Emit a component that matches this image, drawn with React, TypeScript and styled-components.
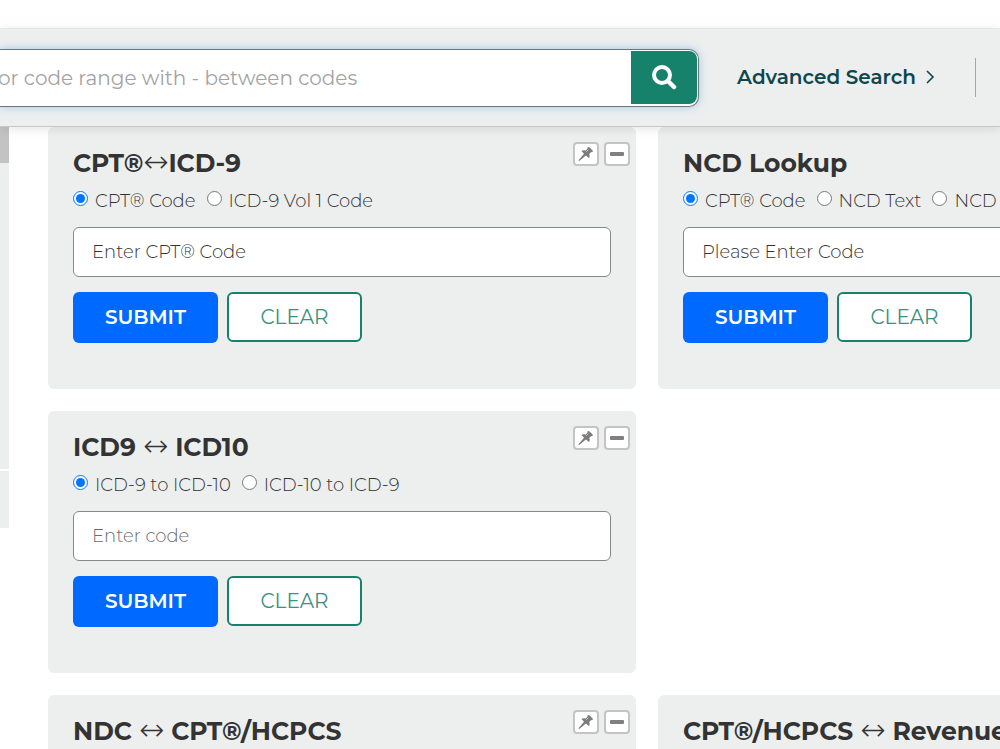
import React from "react";
import styled, { createGlobalStyle } from "styled-components";

const GlobalStyle = createGlobalStyle`
  * { box-sizing: border-box; }
  body {
    margin: 0;
    background: #fff;
    color: #333;
    font-family: Montserrat, Inter, "Liberation Sans", sans-serif;
    overflow-x: hidden;
  }
  button, input { font-family: inherit; }
`;

const Page = styled.div`
  padding-top: 28px;
  overflow: hidden;
  min-height: 100vh;
`;

const Header = styled.header`
  position: relative;
  z-index: 1;
  display: flex;
  align-items: center;
  height: 99px;
  background: #edefef;
  border-top: 1px solid #e4e6e6;
  border-bottom: 1px solid #c6c8c8;
  box-shadow: 0 2px 10px rgba(0, 0, 0, 0.1);
`;

const SearchForm = styled.form`
  display: flex;
  flex: 0 1 699px;
  height: 58px;
  padding: 1px 1px 2px 0;
  background: #fff;
  border: 1px solid #6f7577;
  border-left: 0;
  border-radius: 0 10px 10px 0;
  box-shadow: 0 0 8px rgba(80, 160, 225, 0.5);
`;

const SearchInput = styled.input`
  flex: 1;
  min-width: 0;
  padding: 2px 0 0;
  border: 0;
  outline: 0;
  background: transparent;
  font-size: 20px;
  text-indent: -2px;
  &::placeholder { color: #a3a3a3; opacity: 1; }
`;

const SearchButton = styled.button`
  display: grid;
  place-items: center;
  width: 66px;
  padding: 0;
  border: 0;
  border-radius: 0 8px 8px 0;
  background: #17826c;
`;

const AdvancedLink = styled.a`
  display: flex;
  align-items: center;
  gap: 10px;
  margin-left: 38px;
  padding-bottom: 2px;
  color: #0d474c;
  font-size: 20px;
  font-weight: 600;
  text-decoration: none;
  white-space: nowrap;
`;

const Divider = styled.div`
  width: 1px;
  height: 39px;
  margin-left: 40px;
  background: #a4a7a7;
`;

const Content = styled.div`
  display: flex;
  align-items: flex-start;
`;

const Sidebar = styled.aside`
  flex: 0 0 9px;
  display: grid;
  grid-template-rows: 36px 308px 57px;
`;

const SidebarBlock = styled.div<{ $active?: boolean; $ruled?: boolean }>`
  background: ${(p) => (p.$active ? "#c3c3c3" : "#edefef")};
  border-bottom: ${(p) => (p.$ruled ? "2px solid #fff" : "0")};
`;

const Tools = styled.main`
  flex: 1;
  display: grid;
  grid-template-columns: repeat(2, minmax(588px, 1fr));
  gap: 22px;
  padding: 0 39px;
`;

const Card = styled.section<{ $column: number }>`
  grid-column: ${(p) => p.$column};
  min-height: 262px;
  padding: 20px 25px 46px;
  border-radius: 6px;
  background: #edefef;
`;

const CardHead = styled.div`
  display: flex;
  justify-content: space-between;
  height: 32px;
`;

const Title = styled.h2`
  margin: 0;
  font-size: 25px;
  line-height: 32px;
  font-weight: 700;
  white-space: nowrap;
`;

const Arrow = styled.span`
  font-family: "DejaVu Sans", sans-serif;
  font-size: 30px;
  line-height: 1px;
  font-weight: 200;
`;

const CardActions = styled.div`
  display: flex;
  gap: 5px;
  margin: -5px -19px 0 0;
`;

const IconButton = styled.button`
  display: grid;
  place-items: center;
  width: 26px;
  height: 24px;
  padding: 0;
  border: 2px solid #c4c4c4;
  border-radius: 4px;
  background: #fff;
`;

const Options = styled.div`
  display: flex;
  gap: 11px;
  height: 26px;
  margin: 8px 0 14px;
`;

const Option = styled.label`
  display: flex;
  gap: 7px;
  font-size: 18px;
  line-height: 28px;
  font-weight: 300;
  white-space: nowrap;
  input {
    width: 15px;
    height: 15px;
    margin: 4px 0 0;
    accent-color: #0075ff;
  }
`;

const CodeInput = styled.input<{ $muted?: boolean }>`
  display: block;
  width: 100%;
  height: 50px;
  padding: 0 18px;
  border: 1px solid #84888a;
  border-radius: 6px;
  background: #fff;
  font-size: 18px;
  font-weight: 300;
  &::placeholder { color: ${(p) => (p.$muted ? "#6c6c6c" : "#333")}; opacity: 1; }
`;

const Buttons = styled.div`
  display: flex;
  align-items: flex-start;
  gap: 9px;
  margin-top: 15px;
`;

const SubmitButton = styled.button`
  width: 145px;
  height: 51px;
  padding: 0 0 2px;
  border: 0;
  border-radius: 6px;
  background: #0069ff;
  color: #fff;
  font-size: 20px;
  font-weight: 600;
`;

const ClearButton = styled.button`
  width: 135px;
  height: 50px;
  padding: 0;
  border: 2px solid #17826c;
  border-radius: 6px;
  background: #fff;
  color: #3a917f;
  font-size: 20px;
  font-weight: 400;
`;

const SearchIcon = () => (
  <svg width="26" height="26" viewBox="0 0 26 26" fill="none" stroke="#fff" aria-hidden="true">
    <circle cx="11" cy="11" r="8" strokeWidth="4" />
    <path d="M17 17l6 6" strokeWidth="4.5" strokeLinecap="round" />
  </svg>
);

const ChevronIcon = () => (
  <svg width="9" height="14" viewBox="0 0 9 14" fill="none" stroke="#0d474c" strokeWidth="1.6" aria-hidden="true">
    <path d="M1 1l6 6-6 6" />
  </svg>
);

const PinIcon = () => (
  <svg width="16" height="16" viewBox="0 0 16 16" fill="#7c7c7c" aria-hidden="true">
    <path d="M9.500 1.300c.5-.6 1.300-.5 2 .2l2.700 2.600c.7.7.8 1.400.3 2l-1.500.1-1.800 1.900c.8 1.500.6 3-.3 4L7.900 9.500 1.500 14.800l-.9.1.1-.8L6 7.700 3.500 5.100c1-1 2.600-1.100 4-.4l1.900-1.900z" />
    <path d="M10.400 3.600L8.200 5.800" stroke="#c8c8c8" strokeWidth="1" />
  </svg>
);

const MinusIcon = () => (
  <svg width="14" height="4" viewBox="0 0 14 4" aria-hidden="true">
    <rect width="14" height="4" rx="1" fill="#808080" />
  </svg>
);

type Tool = {
  id: string;
  column: number;
  title: React.ReactNode;
  options: string[];
  placeholder: string;
  muted?: boolean;
};

const tools: Tool[] = [
  {
    id: "cpt-icd9",
    column: 1,
    title: <>CPT®<Arrow>↔</Arrow>ICD-9</>,
    options: ["CPT® Code", "ICD-9 Vol 1 Code"],
    placeholder: "Enter CPT® Code",
  },
  {
    id: "ncd",
    column: 2,
    title: "NCD Lookup",
    options: ["CPT® Code", "NCD Text", "NCD"],
    placeholder: "Please Enter Code",
  },
  {
    id: "icd9-icd10",
    column: 1,
    title: <>ICD9 <Arrow>↔</Arrow> ICD10</>,
    options: ["ICD-9 to ICD-10", "ICD-10 to ICD-9"],
    placeholder: "Enter code",
    muted: true,
  },
  {
    id: "ndc",
    column: 1,
    title: <>NDC <Arrow>↔</Arrow> CPT®/HCPCS</>,
    options: [],
    placeholder: "",
  },
  {
    id: "revenue",
    column: 2,
    title: <>CPT®/HCPCS <Arrow>↔</Arrow> Revenue</>,
    options: [],
    placeholder: "",
  },
];

const ToolCard = ({ tool }: { tool: Tool }) => (
  <Card $column={tool.column}>
    <CardHead>
      <Title>{tool.title}</Title>
      <CardActions>
        <IconButton type="button" aria-label="Pin"><PinIcon /></IconButton>
        <IconButton type="button" aria-label="Collapse"><MinusIcon /></IconButton>
      </CardActions>
    </CardHead>
    {tool.options.length > 0 && (
      <form onSubmit={(e) => e.preventDefault()}>
        <Options>
          {tool.options.map((text, i) => (
            <Option key={text}>
              <input type="radio" name={tool.id} defaultChecked={i === 0} />
              {text}
            </Option>
          ))}
        </Options>
        <CodeInput aria-label={tool.placeholder} placeholder={tool.placeholder} $muted={tool.muted} />
        <Buttons>
          <SubmitButton type="submit">SUBMIT</SubmitButton>
          <ClearButton type="reset">CLEAR</ClearButton>
        </Buttons>
      </form>
    )}
  </Card>
);

export default function App() {
  return (
    <>
      <GlobalStyle />
      <Page>
        <Header>
          <SearchForm onSubmit={(e) => e.preventDefault()}>
            <SearchInput aria-label="Search codes" placeholder="or code range with - between codes" />
            <SearchButton type="submit" aria-label="Search"><SearchIcon /></SearchButton>
          </SearchForm>
          <AdvancedLink href="#advanced">Advanced Search <ChevronIcon /></AdvancedLink>
          <Divider />
        </Header>
        <Content>
          <Sidebar>
            <SidebarBlock $active />
            <SidebarBlock $ruled />
            <SidebarBlock />
          </Sidebar>
          <Tools>
            {tools.map((tool) => <ToolCard key={tool.id} tool={tool} />)}
          </Tools>
        </Content>
      </Page>
    </>
  );
}
